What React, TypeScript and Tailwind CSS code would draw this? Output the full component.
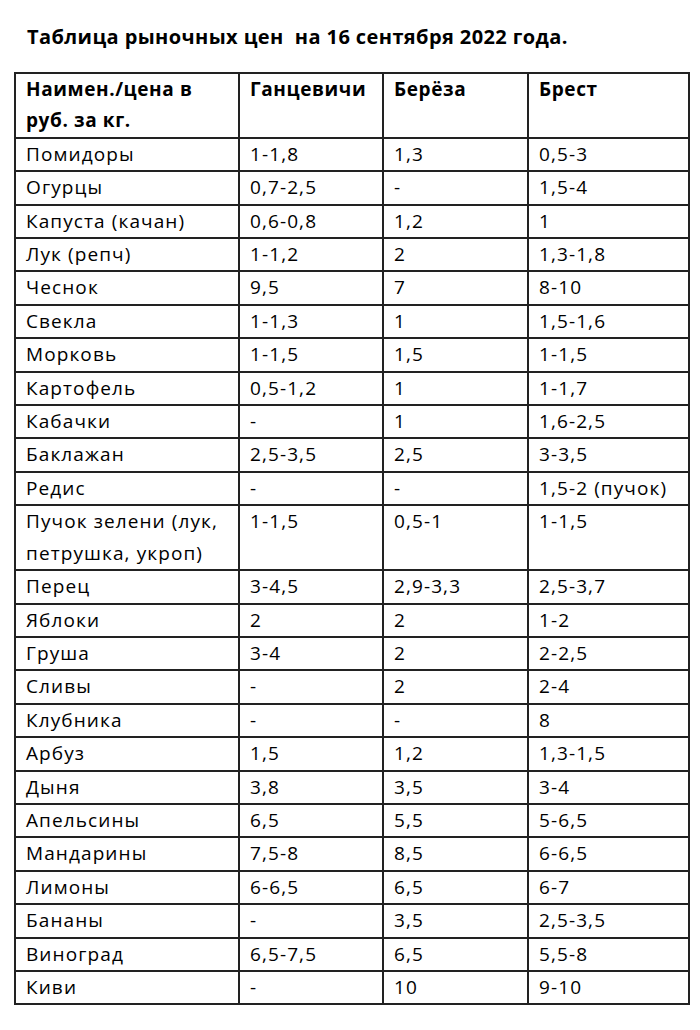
const rows: [string, string, string, string][] = [
  ["Помидоры", "1-1,8", "1,3", "0,5-3"],
  ["Огурцы", "0,7-2,5", "-", "1,5-4"],
  ["Капуста (качан)", "0,6-0,8", "1,2", "1"],
  ["Лук (репч)", "1-1,2", "2", "1,3-1,8"],
  ["Чеснок", "9,5", "7", "8-10"],
  ["Свекла", "1-1,3", "1", "1,5-1,6"],
  ["Морковь", "1-1,5", "1,5", "1-1,5"],
  ["Картофель", "0,5-1,2", "1", "1-1,7"],
  ["Кабачки", "-", "1", "1,6-2,5"],
  ["Баклажан", "2,5-3,5", "2,5", "3-3,5"],
  ["Редис", "-", "-", "1,5-2 (пучок)"],
  ["Пучок зелени (лук, петрушка, укроп)", "1-1,5", "0,5-1", "1-1,5"],
  ["Перец", "3-4,5", "2,9-3,3", "2,5-3,7"],
  ["Яблоки", "2", "2", "1-2"],
  ["Груша", "3-4", "2", "2-2,5"],
  ["Сливы", "-", "2", "2-4"],
  ["Клубника", "-", "-", "8"],
  ["Арбуз", "1,5", "1,2", "1,3-1,5"],
  ["Дыня", "3,8", "3,5", "3-4"],
  ["Апельсины", "6,5", "5,5", "5-6,5"],
  ["Мандарины", "7,5-8", "8,5", "6-6,5"],
  ["Лимоны", "6-6,5", "6,5", "6-7"],
  ["Бананы", "-", "3,5", "2,5-3,5"],
  ["Виноград", "6,5-7,5", "6,5", "5,5-8"],
  ["Киви", "-", "10", "9-10"],
]

export default function App() {
  const cell = "border-2 border-[#222] px-[10px] align-top leading-[31.4px]"
  return (
    <div className="w-[700px] h-[1030px] bg-white text-black font-['Open_Sans',sans-serif]">
      <h1 className="pl-[27px] pt-[24px] h-[72px] text-[20px] font-bold leading-[26px] tracking-[0.4px]">
        Таблица рыночных цен&nbsp; на 16 сентября 2022 года.
      </h1>
      <table className="ml-[14px] w-[674px] border-collapse table-fixed text-[19px] tracking-[1.1px]">
        <colgroup>
          <col className="w-[224px]" />
          <col className="w-[144px]" />
          <col className="w-[145px]" />
          <col className="w-[161px]" />
        </colgroup>
        <thead>
          <tr className="font-bold tracking-[0.6px]">
            <td className={cell}>Наимен./цена в руб. за кг.</td>
            <td className={cell}>Ганцевичи</td>
            <td className={cell}>Берёза</td>
            <td className={cell}>Брест</td>
          </tr>
        </thead>
        <tbody>
          {rows.map((r) => (
            <tr key={r[0]}>
              {r.map((c, i) => (
                <td key={i} className={cell}>{c}</td>
              ))}
            </tr>
          ))}
        </tbody>
      </table>
    </div>
  )
}
